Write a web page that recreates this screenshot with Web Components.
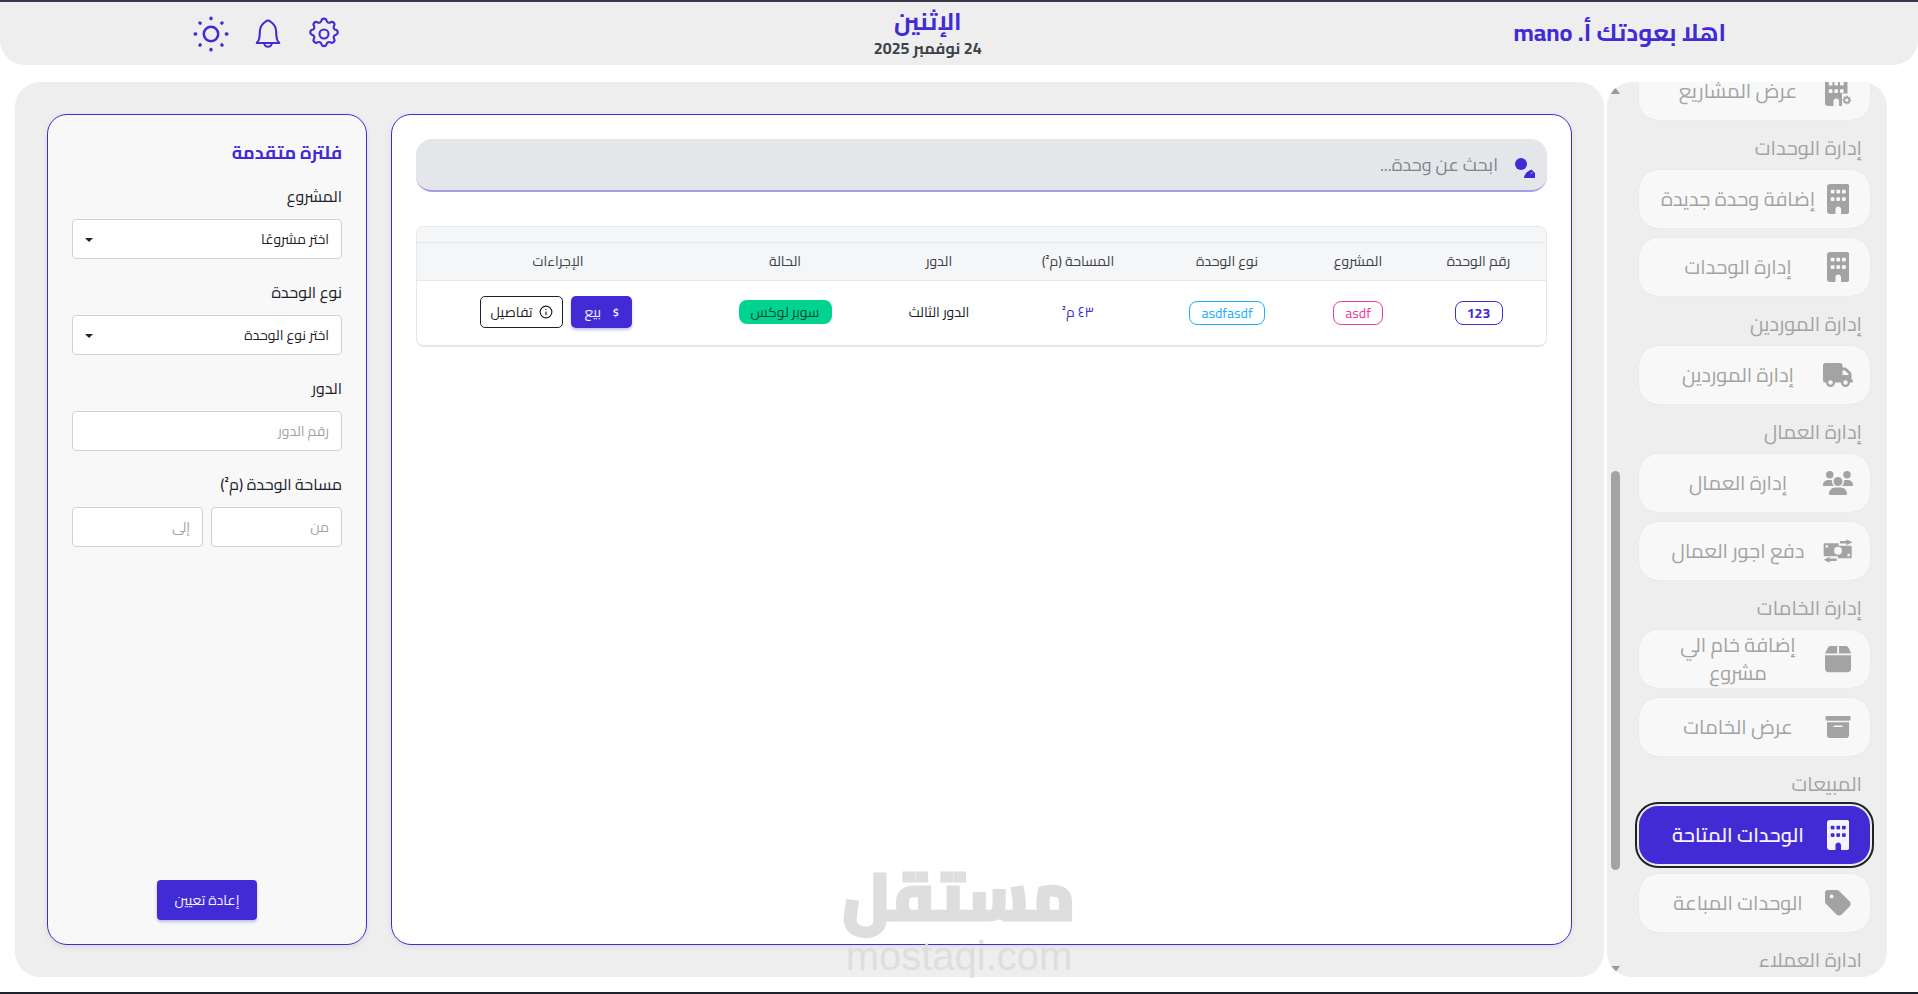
<!DOCTYPE html>
<html lang="ar" dir="rtl">
<head>
<meta charset="utf-8">
<title>الوحدات المتاحة</title>
<style>
    html, body { margin: 0; height: 100%; overflow: hidden; background: #fff; }
    body { font-family: "Cairo", "Noto Kufi Arabic", "DejaVu Sans", sans-serif; color: #1d232a; }
</style>
</head>
<body>
<app-shell>
    <app-header slot="header" name="اهلا بعودتك أ. mano" day="الإثنين" date="24 نوفمبر 2025"></app-header>
    <side-nav slot="side">
        <nav-item icon="buildingGear">عرض المشاريع</nav-item>
        <nav-heading>إدارة الوحدات</nav-heading>
        <nav-item icon="building">إضافة وحدة جديدة</nav-item>
        <nav-item icon="building">إدارة الوحدات</nav-item>
        <nav-heading>إدارة الموردين</nav-heading>
        <nav-item icon="truck">إدارة الموردين</nav-item>
        <nav-heading>إدارة العمال</nav-heading>
        <nav-item icon="users">إدارة العمال</nav-item>
        <nav-item icon="money">دفع اجور العمال</nav-item>
        <nav-heading>إدارة الخامات</nav-heading>
        <nav-item icon="box">إضافة خام الي مشروع</nav-item>
        <nav-item icon="archive">عرض الخامات</nav-item>
        <nav-heading>المبيعات</nav-heading>
        <nav-item icon="building" active>الوحدات المتاحة</nav-item>
        <nav-item icon="tag">الوحدات المباعة</nav-item>
        <nav-heading>ادارة العملاء</nav-heading>
    </side-nav>
    <units-panel slot="main"></units-panel>
    <filter-panel slot="main"></filter-panel>
    <mostaql-mark slot="mark"></mostaql-mark>
</app-shell>

<script>
const WINDOWS = 'M64 112c0-8.800 7.200-16 16-16h32c8.800 0 16 7.200 16 16v32c0 8.800-7.200 16-16 16H80c-8.800 0-16-7.200-16-16V112zm96 0c0-8.800 7.200-16 16-16h32c8.800 0 16 7.200 16 16v32c0 8.800-7.200 16-16 16H176c-8.800 0-16-7.200-16-16V112zm96 0c0-8.800 7.200-16 16-16h32c8.800 0 16 7.200 16 16v32c0 8.800-7.200 16-16 16H272c-8.800 0-16-7.200-16-16V112zM64 240c0-8.800 7.200-16 16-16h32c8.800 0 16 7.200 16 16v32c0 8.800-7.200 16-16 16H80c-8.800 0-16-7.200-16-16V240zm96 0c0-8.800 7.200-16 16-16h32c8.800 0 16 7.200 16 16v32c0 8.800-7.200 16-16 16H176c-8.800 0-16-7.200-16-16V240zm96 0c0-8.800 7.200-16 16-16h32c8.800 0 16 7.200 16 16v32c0 8.800-7.200 16-16 16H272c-8.800 0-16-7.200-16-16V240z';

// small cog for the "projects" icon
function gearPath(cx, cy, outer, inner, hole) {
    let d = '';
    for (let i = 0; i < 8; i++) {
        const a = i * Math.PI / 4;
        [[outer, -0.24], [outer, 0.24], [inner, 0.42], [inner, 0.78 - 0.42 + Math.PI / 4 - 0.36]].forEach(([r, o], j) => {
            const x = cx + r * Math.cos(a + o), y = cy + r * Math.sin(a + o);
            d += (i === 0 && j === 0 ? 'M' : 'L') + x.toFixed(1) + ' ' + y.toFixed(1);
        });
    }
    return d + `zM${cx} ${cy - hole}a${hole} ${hole} 0 1 0 0 ${hole * 2} ${hole} ${hole} 0 1 0 0 ${-hole * 2}z`;
}

const ICONS = {
    building: ['0 0 384 512', 'M48 0C21.500 0 0 21.500 0 48V464c0 26.500 21.500 48 48 48h96V432c0-26.500 21.500-48 48-48s48 21.500 48 48v80h96c26.500 0 48-21.500 48-48V48c0-26.500-21.500-48-48-48H48z' + WINDOWS],
    buildingGear: ['0 0 448 512', 'M48 0H336c26.500 0 48 21.500 48 48V300H290V512H240V432c0-26.500-21.500-48-48-48s-48 21.500-48 48v80H48c-26.500 0-48-21.500-48-48V48C0 21.500 21.500 0 48 0z' + WINDOWS + gearPath(372, 410, 76, 58, 28)],
    truck: ['0 0 640 512', 'M48 0C21.500 0 0 21.5 0 48V368c0 26.5 21.5 48 48 48H64c0 53 43 96 96 96s96-43 96-96H384c0 53 43 96 96 96s96-43 96-96h32c17.7 0 32-14.300 32-32s-14.300-32-32-32V237.300c0-17-6.700-33.300-18.700-45.300L512 114.700c-12-12-28.300-18.700-45.300-18.700H416V48c0-26.500-21.500-48-48-48H48zM416 160h50.700L544 237.300V256H416V160zM112 416a48 48 0 1 1 96 0 48 48 0 1 1-96 0zm368-48a48 48 0 1 1 0 96 48 48 0 1 1 0-96z'],
    users: ['0 0 640 512', 'M144 0a80 80 0 1 1 0 160A80 80 0 1 1 144 0zM512 0a80 80 0 1 1 0 160A80 80 0 1 1 512 0zM0 298.700C0 239.800 47.800 192 106.700 192h42.700c15.900 0 31 3.500 44.600 9.700c-1.300 7.200-1.900 14.700-1.900 22.300c0 38.200 16.800 72.500 43.300 96c-.2 0-.4 0-.7 0H21.300C9.600 320 0 310.400 0 298.700zM405.300 320c-.2 0-.4 0-.7 0c26.600-23.500 43.300-57.800 43.300-96c0-7.600-.7-15-1.900-22.300c13.600-6.300 28.700-9.700 44.600-9.700h42.700C592.200 192 640 239.800 640 298.700c0 11.800-9.600 21.300-21.300 21.300H405.300zM224 224a96 96 0 1 1 192 0 96 96 0 1 1-192 0zM128 485.300C128 411.700 187.700 352 261.300 352H378.700C452.300 352 512 411.700 512 485.300c0 14.700-11.900 26.700-26.700 26.700H154.700c-14.700 0-26.700-11.900-26.700-26.700z'],
    money: ['0 0 92 72', 'M6 12H48V20H84a4 4 0 0 1 4 4V58H46V52H6a4 4 0 0 1-4-4V16a4 4 0 0 1 4-4zM46 23a12 12 0 1 0 0 24 12 12 0 1 0 0-24zM8 18v8a8 8 0 0 0 8-8zM82 52v-8a8 8 0 0 0-8 8zM72 0L90 9 72 18V13H52V5H72zM20 54L2 63 20 72V67H42V59H20z'],
    box: ['0 0 448 512', 'M50.700 58.500L0 160H208V32H93.700C75.500 32 58.900 42.300 50.700 58.500zM240 160H448L397.300 58.500C389.100 42.300 372.500 32 354.300 32H240V160zm208 32H0V416c0 35.300 28.700 64 64 64H384c35.300 0 64-28.700 64-64V192z'],
    archive: ['-48 -48 608 608', 'M32 32H480c17.700 0 32 14.300 32 32V96c0 17.700-14.300 32-32 32H32C14.300 128 0 113.700 0 96V64C0 46.300 14.300 32 32 32zm0 128H480V416c0 35.300-28.700 64-64 64H96c-35.300 0-64-28.700-64-64V160zm128 80c0 8.800 7.200 16 16 16H336c8.800 0 16-7.200 16-16s-7.200-16-16-16H176c-8.800 0-16 7.200-16 16z'],
    tag: ['0 0 448 512', 'M0 80V229.500c0 17 6.700 33.300 18.700 45.300l176 176c25 25 65.500 25 90.500 0L418.700 317.300c25-25 25-65.500 0-90.500l-176-176c-12-12-28.300-18.700-45.300-18.700H48C21.500 32 0 53.500 0 80zm112 32a32 32 0 1 1 0 64 32 32 0 1 1 0-64z']
};

class AppShell extends HTMLElement {
    constructor() {
        super();
        this.attachShadow({ mode: 'open' });
        this.shadowRoot.innerHTML = `
            <style>
                :host {
                    display: flex;
                    flex-direction: column;
                    height: 994px;
                    box-sizing: border-box;
                    border-top: 2px solid #323a49;
                    border-bottom: 2px solid #1d232a;
                    position: relative;
                }
                .row {
                    display: flex;
                    gap: 3px;
                    height: 895px;
                    margin-top: 17px;
                    padding: 0 31px 0 15px;
                }
                .main {
                    flex: 1;
                    display: flex;
                    gap: 24px;
                    padding: 32px;
                    background: #eeeeee;
                    border-radius: 25px;
                    min-width: 0;
                }
            </style>
            <slot name="header"></slot>
            <div class="row">
                <slot name="side"></slot>
                <div class="main"><slot name="main"></slot></div>
            </div>
            <slot name="mark"></slot>
        `;
    }
}

class AppHeader extends HTMLElement {
    constructor() {
        super();
        this.attachShadow({ mode: 'open' });
        this.shadowRoot.innerHTML = `
            <style>
                :host {
                    display: flex;
                    justify-content: space-between;
                    align-items: center;
                    height: 63px;
                    padding: 0 192px 0 193px;
                    background: #eeeeee;
                    border-radius: 0 0 25px 25px;
                }
                .hello { font-size: 24px; font-weight: 700; color: #422ad5; margin-top: -2px; }
                .when { text-align: center; line-height: 1; margin-top: -1px; }
                .day { font-size: 24px; font-weight: 700; color: #422ad5; margin-bottom: 6px; }
                .date { font-size: 16px; font-weight: 700; color: #3d4249; }
                .icons { display: flex; gap: 20.500px; align-items: center; }
                svg { width: 36px; height: 36px; fill: none; stroke: #422ad5; stroke-width: 1.400; stroke-linecap: round; stroke-linejoin: round; display: block; }
            </style>
            <div class="hello"></div>
            <div class="when"><div class="day"></div><div class="date"></div></div>
            <div class="icons">
                <svg viewBox="0 0 24 24"><path d="M10.3 3.1c.4-1.800 3-1.800 3.400 0a1.700 1.700 0 0 0 2.600 1.100c1.600-1 3.400.8 2.400 2.400a1.700 1.700 0 0 0 1.100 2.600c1.800.4 1.800 3 0 3.400a1.700 1.700 0 0 0-1.100 2.600c1 1.600-.8 3.400-2.400 2.400a1.700 1.700 0 0 0-2.600 1.100c-.4 1.800-3 1.800-3.400 0a1.700 1.700 0 0 0-2.600-1.100c-1.600 1-3.400-.8-2.400-2.400a1.700 1.700 0 0 0-1.100-2.600c-1.800-.4-1.800-3 0-3.400a1.700 1.700 0 0 0 1.100-2.600c-1-1.600.8-3.400 2.400-2.400a1.700 1.700 0 0 0 2.600-1.100z"/><circle cx="12" cy="12" r="3"/></svg>
                <svg viewBox="0 0 24 24"><path d="M4.500 18h15c-1-1-1.800-2.200-1.900-4.500l-.2-3.500c-.2-2.800-2-5-3.400-6-.5-.4-1-1-2-1s-1.500.6-2 1c-1.400 1-3.200 3.200-3.400 6l-.2 3.500C6.300 15.800 5.500 17 4.500 18z"/><path d="M9.500 18a2.500 2.500 0 0 0 5 0"/></svg>
                <svg viewBox="0 0 24 24"><circle cx="12" cy="12" r="4.800" stroke-width="1.700"/><path stroke-width="2.200" d="M12 1.400v.4M12 22.200v.4M1.400 12h.4M22.200 12h.4M4.600 4.600l.2.2M19.200 19.200l.2.2M4.600 19.400l.2-.2M19.200 4.800l.2-.2"/></svg>
            </div>
        `;
        this.shadowRoot.querySelector('.hello').textContent = this.getAttribute('name');
        this.shadowRoot.querySelector('.day').textContent = this.getAttribute('day');
        this.shadowRoot.querySelector('.date').textContent = this.getAttribute('date');
    }
}

class SideNav extends HTMLElement {
    constructor() {
        super();
        this.attachShadow({ mode: 'open' });
        this.shadowRoot.innerHTML = `
            <style>
                :host {
                    display: flex;
                    flex: 0 0 280px;
                    height: 895px;
                    background: #eeeeee;
                    border-radius: 25px;
                    overflow: hidden;
                }
                .scroller {
                    flex: 1;
                    min-width: 0;
                    overflow: hidden;
                    padding-right: 17px;
                }
                .list { margin-top: -20px; display: flex; flex-direction: column; gap: 10px; }
                .rail {
                    flex: 0 0 9px;
                    padding: 0 3px 0 0;
                    display: flex;
                    flex-direction: column;
                    align-items: center;
                    margin-left: 3px;
                }
                .arrow { width: 0; height: 0; border: 5px solid transparent; flex: none; }
                .up { border-bottom: 7px solid #9a9a9a; border-top: 0; margin-top: 5px; }
                .down { border-top: 7px solid #9a9a9a; border-bottom: 0; margin-top: auto; margin-bottom: 4px; }
                .thumb { width: 9px; height: 399px; background: #a3a3a3; border-radius: 5px; margin-top: 377px; flex: none; }
            </style>
            <div class="scroller"><div class="list"><slot></slot></div></div>
            <div class="rail">
                <div class="arrow up"></div>
                <div class="thumb"></div>
                <div class="arrow down"></div>
            </div>
        `;
    }
}

class NavHeading extends HTMLElement {
    constructor() {
        super();
        this.attachShadow({ mode: 'open' });
        this.shadowRoot.innerHTML = `
            <style>
                :host {
                    display: block;
                    height: 30px;
                    line-height: 30px;
                    margin: 3px 8px -3px 0;
                    font-size: 20px;
                    color: #a3a3a3;
                    white-space: nowrap;
                }
            </style>
            <slot></slot>
        `;
    }
}

class NavItem extends HTMLElement {
    constructor() {
        super();
        this.attachShadow({ mode: 'open' });
        const icon = ICONS[this.getAttribute('icon')];
        this.shadowRoot.innerHTML = `
            <style>
                :host {
                    display: flex;
                    align-items: center;
                    gap: 6px;
                    width: 231px;
                    height: 58px;
                    box-sizing: border-box;
                    padding: 0 17px 0 20px;
                    background: #f8f8f8;
                    border-radius: 19px;
                    box-shadow: 0 0 1px rgba(0,0,0,.12);
                    color: #a3a3a3;
                    font-size: 20px;
                    line-height: 28px;
                }
                :host([active]) {
                    background: #422ad5;
                    color: #f5f3ff;
                    font-weight: 600;
                    outline: 2px solid #1d232a;
                    outline-offset: 2px;
                }
                .icon { flex: 0 0 30px; display: flex; justify-content: center; }
                svg { height: 30px; max-width: 30px; fill: currentColor; display: block; }
                .label { flex: 1; text-align: center; }
            </style>
            <div class="icon"><svg viewBox="${icon[0]}"><path fill-rule="evenodd" d="${icon[1]}"/></svg></div>
            <div class="label"><slot></slot></div>
        `;
    }
}

class UnitsPanel extends HTMLElement {
    constructor() {
        super();
        this.attachShadow({ mode: 'open' });
        this.shadowRoot.innerHTML = `
            <style>
                :host {
                    display: block;
                    flex: 0 0 1181px;
                    box-sizing: border-box;
                    padding: 24px;
                    background: #fff;
                    border: 1px solid #422ad5;
                    border-radius: 20px;
                    box-shadow: 0 2px 6px rgba(0,0,0,.06);
                }
                .search {
                    display: flex;
                    align-items: center;
                    gap: 17px;
                    height: 53px;
                    box-sizing: border-box;
                    padding: 0 12px;
                    background: #e5e6ea;
                    border-bottom: 2px solid #a89de8;
                    border-radius: 16px;
                }
                .search svg { width: 20px; height: 20px; flex: none; margin-top: 7px; }
                .search input {
                    flex: 1;
                    border: 0;
                    outline: 0;
                    background: transparent;
                    font: inherit;
                    font-size: 18px;
                    padding: 0;
                }
                .search input::placeholder { color: #80848b; }
                .table {
                    margin-top: 34px;
                    border: 1px solid #e6e7ea;
                    border-bottom-width: 2px;
                    border-radius: 8px;
                    overflow: hidden;
                    font-size: 14px;
                }
                .band { height: 15px; background: #f5f6f8; border-bottom: 1px solid #e6e7ea; }
                .tr {
                    display: grid;
                    grid-template-columns: 135px 106px 156px 142px 136px 172px 1fr;
                    align-items: center;
                    text-align: center;
                }
                .head { height: 38px; box-sizing: border-box; padding-bottom: 2px; background: #f5f6f8; border-bottom: 1px solid #e6e7ea; color: #3d4249; }
                .body { height: 64px; box-sizing: border-box; padding-bottom: 2px; }
                .pill {
                    display: inline-block;
                    height: 24px;
                    line-height: 22px;
                    box-sizing: border-box;
                    border: 1px solid currentColor;
                    border-radius: 8px;
                    padding: 0 10px;
                    vertical-align: middle;
                }
                .num { color: #422ad5; font-weight: 700; min-width: 48px; }
                .project { color: #ec3d9e; min-width: 50px; }
                .kind { color: #1ab2ff; min-width: 76px; }
                .area { color: #422ad5; }
                .status {
                    display: inline-block;
                    background: #00d390;
                    color: #004c39;
                    border-radius: 8px;
                    height: 24px;
                    line-height: 24px;
                    min-width: 93px;
                    padding: 0 6px;
                    box-sizing: border-box;
                }
                .actions { display: flex; justify-content: center; gap: 8px; padding-right: 4px; }
                button {
                    display: flex;
                    align-items: center;
                    justify-content: center;
                    gap: 6px;
                    height: 32px;
                    border-radius: 5px;
                    font: inherit;
                    font-size: 14px;
                    padding: 0;
                    cursor: pointer;
                }
                .sell { width: 61px; gap: 12px; background: #422ad5; color: #f5f3ff; border: 0; box-shadow: 0 2px 3px rgba(66,42,213,.3); }
                .details { width: 83px; background: #fff; color: #1d232a; border: 1px solid #1d232a; }
                .sell b { font-size: 10px; }
                .details svg { width: 14px; height: 14px; fill: none; stroke: currentColor; stroke-width: 2; }
            </style>
            <div class="search">
                <svg viewBox="0 0 20 20"><circle cx="6" cy="6" r="6" fill="#422ad5"/><path d="M9 20c.5-4 3-7 7.500-8.500L20 15v5z" fill="#422ad5"/><path d="M17.500 14.300l-1.600 1.500" stroke="#fff" stroke-width=".8"/></svg>
                <input type="text" placeholder="ابحث عن وحدة...">
            </div>
            <div class="table">
                <div class="band"></div>
                <div class="tr head">
                    <div>رقم الوحدة</div><div>المشروع</div><div>نوع الوحدة</div><div>المساحة (م²)</div><div>الدور</div><div>الحالة</div><div>الإجراءات</div>
                </div>
                <div class="tr body">
                    <div><span class="pill num">123</span></div>
                    <div><span class="pill project">asdf</span></div>
                    <div><span class="pill kind">asdfasdf</span></div>
                    <div class="area">٤٣ م²</div>
                    <div>الدور الثالث</div>
                    <div><span class="status">سوبر لوكس</span></div>
                    <div class="actions">
                        <button class="sell"><b>$</b> بيع</button>
                        <button class="details"><svg viewBox="0 0 24 24"><circle cx="12" cy="12" r="10"/><path d="M12 11v6M12 7v1.500"/></svg> تفاصيل</button>
                    </div>
                </div>
            </div>
        `;
    }
}

class FilterPanel extends HTMLElement {
    constructor() {
        super();
        this.attachShadow({ mode: 'open' });
        this.shadowRoot.innerHTML = `
            <style>
                :host {
                    display: flex;
                    flex-direction: column;
                    flex: 0 0 320px;
                    box-sizing: border-box;
                    padding: 24px;
                    background: #f8f8f8;
                    border: 1px solid #422ad5;
                    border-radius: 20px;
                    box-shadow: 0 2px 6px rgba(0,0,0,.08);
                }
                h2 { margin: 0 0 17px; font-size: 18px; line-height: 28px; font-weight: 700; color: #422ad5; }
                label { display: block; font-size: 16px; line-height: 24px; height: 24px; margin-bottom: 11px; color: #1d232a; }
                .field { margin-bottom: 21px; }
                .control {
                    display: block;
                    width: 100%;
                    height: 40px;
                    box-sizing: border-box;
                    background: #fff;
                    border: 1px solid #d0d0d0;
                    border-radius: 4px;
                    padding: 0 12px;
                    font: inherit;
                    font-size: 14px;
                    color: #1d232a;
                    outline: 0;
                    appearance: none;
                }
                .control::placeholder { color: #a3a3a3; }
                .pick { position: relative; }
                .pick::after {
                    content: "";
                    position: absolute;
                    left: 13px;
                    top: 19px;
                    border: 4px solid transparent;
                    border-top: 4px solid #1d232a;
                    border-bottom: 0;
                    pointer-events: none;
                }
                .range { display: flex; gap: 8px; }
                .range .control:first-child { flex: 0 0 131px; width: 131px; }
                .range .control:last-child { flex: 1; min-width: 0; }
                .reset {
                    align-self: center;
                    margin-top: auto;
                    width: 100px;
                    height: 40px;
                    border: 0;
                    border-radius: 4px;
                    background: #422ad5;
                    color: #f5f3ff;
                    font: inherit;
                    font-size: 14px;
                    box-shadow: 0 2px 3px rgba(66,42,213,.3);
                }
            </style>
            <h2>فلترة متقدمة</h2>
            <div class="field">
                <label>المشروع</label>
                <div class="pick"><select class="control"><option>اختر مشروعًا</option></select></div>
            </div>
            <div class="field">
                <label>نوع الوحدة</label>
                <div class="pick"><select class="control"><option>اختر نوع الوحدة</option></select></div>
            </div>
            <div class="field">
                <label>الدور</label>
                <input class="control" type="text" placeholder="رقم الدور">
            </div>
            <div class="field">
                <label>مساحة الوحدة (م²)</label>
                <div class="range">
                    <input class="control" type="text" placeholder="من">
                    <input class="control" type="text" placeholder="إلى">
                </div>
            </div>
            <button class="reset">إعادة تعيين</button>
        `;
    }
}

class MostaqlMark extends HTMLElement {
    constructor() {
        super();
        this.attachShadow({ mode: 'open' });
        this.shadowRoot.innerHTML = `
            <style>
                :host {
                    position: absolute;
                    left: 843px;
                    top: 856px;
                    width: 232px;
                    text-align: center;
                    color: #dedede;
                    pointer-events: none;
                    line-height: 1;
                }
                .ar { font-size: 66px; font-weight: 800; height: 76px; line-height: 76px; -webkit-text-stroke: 3px #dedede; }
                .en { font-family: "Liberation Sans", sans-serif; font-size: 40px; direction: ltr; margin-top: 2px; }
            </style>
            <div class="ar">مستقل</div>
            <div class="en">mostaqi.com</div>
        `;
    }
}

customElements.define('app-shell', AppShell);
customElements.define('app-header', AppHeader);
customElements.define('side-nav', SideNav);
customElements.define('nav-heading', NavHeading);
customElements.define('nav-item', NavItem);
customElements.define('units-panel', UnitsPanel);
customElements.define('filter-panel', FilterPanel);
customElements.define('mostaql-mark', MostaqlMark);
</script>
</body>
</html>
